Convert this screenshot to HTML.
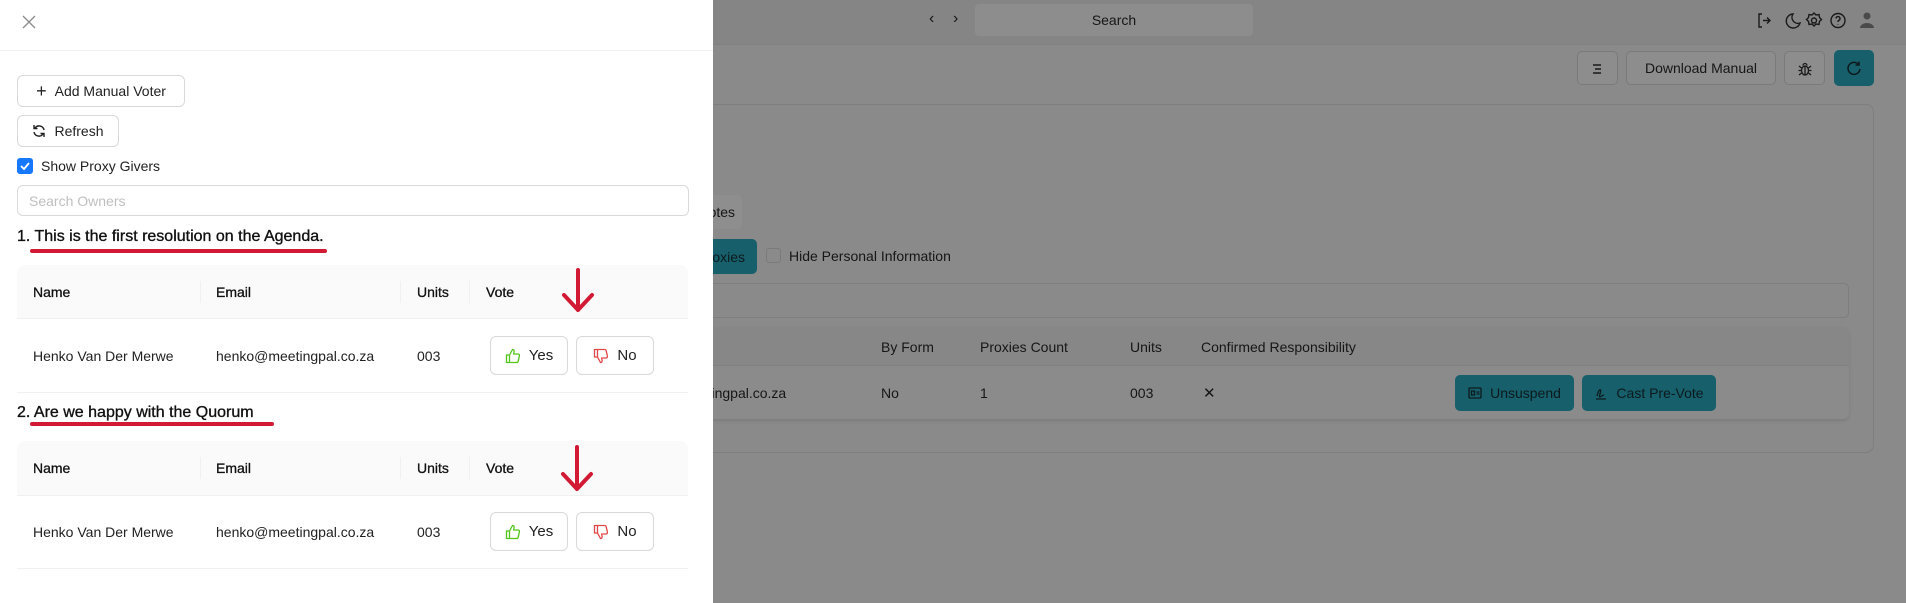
<!DOCTYPE html>
<html><head><meta charset="utf-8"><style>
*{box-sizing:border-box;margin:0;padding:0}
body{width:1906px;height:603px;overflow:hidden;position:relative;font-family:"Liberation Sans",sans-serif;background:#8a8a8a;color:#111}
.a{position:absolute}
.bg{color:#161616;font-size:14px}
.btnr{position:absolute;border:1px solid #7a7a7a;border-radius:5px;background:#8d8d8d}
.teal{position:absolute;background:#165f6b;border-radius:5px;color:#0d1a1d;font-size:14px;display:flex;align-items:center;justify-content:center;gap:8px}
.dr{position:absolute;left:0;top:0;width:713px;height:603px;background:#fff}
.btn{position:absolute;border:1px solid #d9d9d9;border-radius:6px;background:#fff;font-size:14px;color:#222;display:flex;align-items:center;justify-content:center;gap:8px}
.th{position:absolute;left:17px;width:671px;background:#fafafa;border-bottom:1px solid #f0f0f0;border-radius:8px 8px 0 0;font-size:14px;color:#111;-webkit-text-stroke:0.3px #111}
.th span{position:absolute;top:50%;transform:translateY(-50%)}
.sep{position:absolute;top:50%;height:22px;margin-top:-11px;width:1px;background:#f0f0f0}
.row{position:absolute;left:17px;width:671px;border-bottom:1px solid #f0f0f0;font-size:14px;color:#222}
.row span{position:absolute;top:50%;transform:translateY(-50%)}
.h{position:absolute;left:17px;font-size:16px;color:#111;-webkit-text-stroke:0.35px #111}
</style></head><body>
<div class="a" style="left:0;top:0;width:1906px;height:45px;background:#858585;border-bottom:1px solid #808080"></div>
<div class="a bg" style="left:929px;top:10px;font-size:16px">&#8249;</div>
<div class="a bg" style="left:953px;top:10px;font-size:16px">&#8250;</div>
<div class="a" style="left:975px;top:4px;width:278px;height:32px;background:#8d8d8d;border-radius:4px;font-size:14px;color:#161616;text-align:center;line-height:32px">Search</div>
<svg class="a" style="left:1757px;top:11px" width="122" height="20" viewBox="0 0 122 20" fill="none" stroke="#1a1a1a" stroke-width="1.4">
<path d="M5 3H2v13h3M6 9.5h7M10 6.5l3 3-3 3"/>
<path d="M36 3a7 7 0 1 0 7 9 6 6 0 0 1-7-9z"/>
<circle cx="57" cy="9.5" r="2.5"/><path d="M57 2l2 2 3-.5.5 3 2 2-2 2-.5 3-3-.5-2 2-2-2-3 .5-.5-3-2-2 2-2 .5-3 3 .5z"/>
<circle cx="81" cy="9.5" r="7"/><path d="M79 7.5a2 2 0 1 1 2.5 2c-.5.3-.5 1-.5 1.5M81 13v.5"/>
<circle cx="110" cy="5" r="3.5" fill="#4a4a4a" stroke="none"/><path d="M103 17a7 5 0 0 1 14 0z" fill="#4a4a4a" stroke="none"/>
</svg>
<div class="btnr" style="left:1577px;top:51px;width:41px;height:34px"><svg class="a" style="left:13px;top:10px" width="14" height="14" stroke="#1a1a1a" stroke-width="1.5"><path d="M2 3h8M4 7h6M2 11h8"/></svg></div>
<div class="btnr" style="left:1626px;top:51px;width:150px;height:34px;font-size:14px;color:#161616;text-align:center;line-height:32px">Download Manual</div>
<div class="btnr" style="left:1784px;top:51px;width:41px;height:34px"><svg class="a" style="left:12px;top:9px" width="16" height="16" fill="none" stroke="#1a1a1a" stroke-width="1.3"><ellipse cx="8" cy="9.5" rx="3.5" ry="4.5"/><path d="M6 4.5a2 2 0 0 1 4 0M8 5v9M1.5 9.5h3M11.5 9.5h3M2 5l2.5 2M14 5l-2.5 2M2 14l2.5-2M14 14l-2.5-2"/></svg></div>
<div class="teal" style="left:1834px;top:50px;width:40px;height:36px"><svg width="16" height="16" fill="none" stroke="#0d1a1d" stroke-width="1.5"><path d="M13 5A6 6 0 1 0 14 9M13 1.5V5H9.5"/></svg></div>
<div class="a" style="left:640px;top:104px;width:1234px;height:349px;border:1px solid #7e7e7e;border-radius:8px"></div>
<div class="a" style="left:690px;top:195px;width:52px;height:34px;background:#8e8e8e;border-radius:5px;font-size:14px;color:#161616;line-height:34px;padding-left:10px">Votes</div>
<div class="teal" style="left:680px;top:239px;width:77px;height:35px;justify-content:flex-end;padding-right:12px">Proxies</div>
<div class="a" style="left:766px;top:248px;width:15px;height:15px;border:1px solid #7a7a7a;border-radius:3px"></div>
<div class="a bg" style="left:789px;top:248px">Hide Personal Information</div>
<div class="a" style="left:640px;top:283px;width:1209px;height:35px;border:1px solid #7e7e7e;border-radius:5px"></div>
<div class="a" style="left:640px;top:327px;width:1209px;height:92px;background:#8b8b8b;border-radius:6px;box-shadow:0 2px 3px rgba(0,0,0,.1)"></div>
<div class="a" style="left:640px;top:327px;width:1209px;height:39px;background:#878787;border-bottom:1px solid #808080;border-radius:6px 6px 0 0"></div>
<div class="a bg" style="left:881px;top:339px">By Form</div>
<div class="a bg" style="left:980px;top:339px">Proxies Count</div>
<div class="a bg" style="left:1130px;top:339px">Units</div>
<div class="a bg" style="left:1201px;top:339px">Confirmed Responsibility</div>
<div class="a bg" style="left:628px;top:385px">henko@meetingpal.co.za</div>
<div class="a bg" style="left:881px;top:385px">No</div>
<div class="a bg" style="left:980px;top:385px">1</div>
<div class="a bg" style="left:1130px;top:385px">003</div>
<div class="a bg" style="left:1203px;top:384px;font-size:15px">&#10005;</div>
<div class="teal" style="left:1455px;top:375px;width:119px;height:36px"><svg width="14" height="12" fill="none" stroke="#0d1a1d" stroke-width="1.3"><rect x="1" y="1" width="12" height="10" rx="1"/><path d="M3.5 4h3v4h-3zM8.5 5h3M8.5 7h3"/></svg>Unsuspend</div>
<div class="teal" style="left:1582px;top:375px;width:134px;height:36px"><svg width="14" height="14" fill="none" stroke="#0d1a1d" stroke-width="1.3"><path d="M2 13h10M3 10c2-8 5-8 3-2s2 1 4 1"/></svg>Cast Pre-Vote</div>

<div class="dr">
<svg class="a" style="left:22px;top:15px" width="14" height="14" stroke="#8c8c8c" stroke-width="1.3"><path d="M1 1l12 12M13 1L1 13"/></svg>
<div class="a" style="left:0;top:50px;width:713px;height:1px;background:#f0f0f0"></div>
<div class="btn" style="left:17px;top:75px;width:168px;height:32px"><span style="font-size:18px;line-height:14px">+</span>Add Manual Voter</div>
<div class="btn" style="left:17px;top:115px;width:102px;height:32px"><svg width="14" height="14" fill="none" stroke="#222" stroke-width="1.4"><path d="M12 6A5 5 0 0 0 3 4M2 1v3.5h3.5M2 8a5 5 0 0 0 9 2M12 13V9.5H8.5"/></svg>Refresh</div>
<div class="a" style="left:17px;top:158px;width:16px;height:16px;background:#1677ff;border-radius:3px"><svg class="a" style="left:3px;top:3px" width="10" height="10" fill="none" stroke="#fff" stroke-width="1.8"><path d="M1 5l3 3 5-6"/></svg></div>
<div class="a" style="left:41px;top:158px;font-size:14px;color:#222">Show Proxy Givers</div>
<div class="a" style="left:17px;top:185px;width:672px;height:31px;border:1px solid #d9d9d9;border-radius:6px;font-size:14px;color:#bfbfbf;padding:7px 11px">Search Owners</div>

<div class="h" style="top:228px">1. This is the first resolution on the Agenda.</div>
<div class="a" style="left:30px;top:249px;width:297px;height:4px;background:#d21a35;border-radius:2px"></div>
<div class="th" style="top:265px;height:54px"><span style="left:16px">Name</span><div class="sep" style="left:183px"></div><span style="left:199px">Email</span><div class="sep" style="left:383px"></div><span style="left:400px">Units</span><div class="sep" style="left:452px"></div><span style="left:469px">Vote</span></div>
<div class="row" style="top:319px;height:74px"><span style="left:16px">Henko Van Der Merwe</span><span style="left:199px">henko@meetingpal.co.za</span><span style="left:400px">003</span></div>
<div class="btn" style="left:490px;top:336px;width:78px;height:39px;font-size:15px"><svg width="16" height="16" fill="none" stroke="#52c41a" stroke-width="1.3"><path d="M1.5 7h3v7.5h-3zM4.5 7l3-5.5c1.2 0 1.8.8 1.6 2L8.7 6h4.3c1 0 1.6.9 1.4 1.8l-1.2 5.5c-.2.7-.8 1.2-1.5 1.2H4.5"/></svg>Yes</div>
<div class="btn" style="left:576px;top:336px;width:78px;height:39px;font-size:15px"><svg width="16" height="16" fill="none" stroke="#e04848" stroke-width="1.3"><path d="M1.5 9h3V1.5h-3zM4.5 9l3 5.5c1.2 0 1.8-.8 1.6-2L8.7 10h4.3c1 0 1.6-.9 1.4-1.8l-1.2-5.5c-.2-.7-.8-1.2-1.5-1.2H4.5"/></svg>No</div>

<div class="h" style="top:404px">2. Are we happy with the Quorum</div>
<div class="a" style="left:30px;top:422px;width:244px;height:4px;background:#d21a35;border-radius:2px"></div>
<div class="th" style="top:441px;height:55px"><span style="left:16px">Name</span><div class="sep" style="left:183px"></div><span style="left:199px">Email</span><div class="sep" style="left:383px"></div><span style="left:400px">Units</span><div class="sep" style="left:452px"></div><span style="left:469px">Vote</span></div>
<div class="row" style="top:496px;height:73px"><span style="left:16px">Henko Van Der Merwe</span><span style="left:199px">henko@meetingpal.co.za</span><span style="left:400px">003</span></div>
<div class="btn" style="left:490px;top:512px;width:78px;height:39px;font-size:15px"><svg width="16" height="16" fill="none" stroke="#52c41a" stroke-width="1.3"><path d="M1.5 7h3v7.5h-3zM4.5 7l3-5.5c1.2 0 1.8.8 1.6 2L8.7 6h4.3c1 0 1.6.9 1.4 1.8l-1.2 5.5c-.2.7-.8 1.2-1.5 1.2H4.5"/></svg>Yes</div>
<div class="btn" style="left:576px;top:512px;width:78px;height:39px;font-size:15px"><svg width="16" height="16" fill="none" stroke="#e04848" stroke-width="1.3"><path d="M1.5 9h3V1.5h-3zM4.5 9l3 5.5c1.2 0 1.8-.8 1.6-2L8.7 10h4.3c1 0 1.6-.9 1.4-1.8l-1.2-5.5c-.2-.7-.8-1.2-1.5-1.2H4.5"/></svg>No</div>

<svg class="a" style="left:555px;top:266px" width="46" height="50" fill="none" stroke="#d21a35" stroke-width="4" stroke-linecap="round" stroke-linejoin="round"><path d="M23 4v40M9 29l14 15 14-15"/></svg>
<svg class="a" style="left:554px;top:443px" width="46" height="52" fill="none" stroke="#d21a35" stroke-width="4" stroke-linecap="round" stroke-linejoin="round"><path d="M23 4v42M9 31l14 15 14-15"/></svg>
</div>
</body></html>
